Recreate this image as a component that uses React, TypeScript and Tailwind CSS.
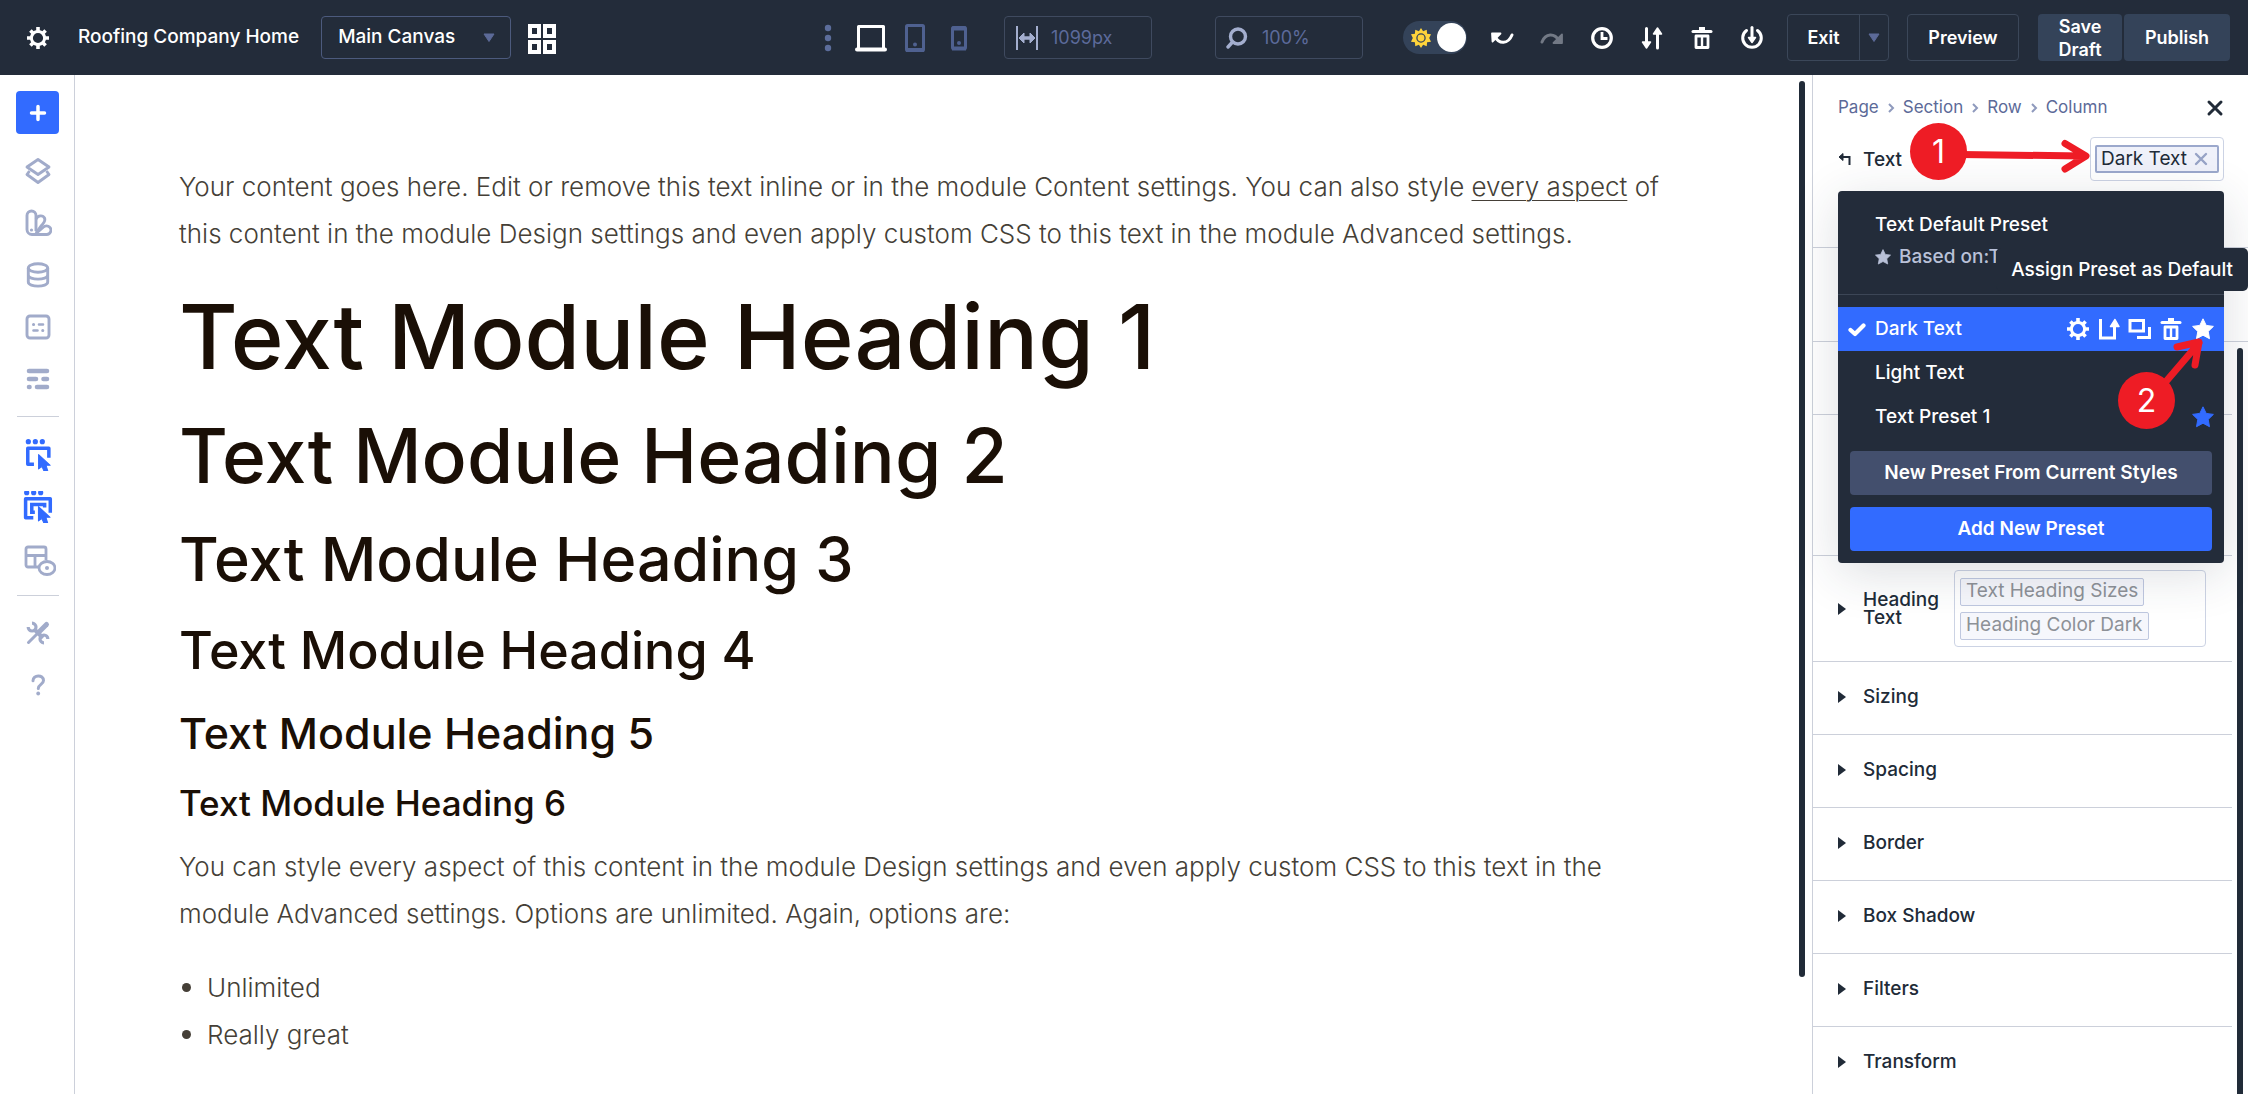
import React from 'react';

type IconProps = { size?: number; className?: string; children: React.ReactNode };

function Icon({ size = 28, className = '', children }: IconProps) {
  return (
    <svg
      width={size}
      height={size}
      viewBox="0 0 28 28"
      fill="none"
      stroke="currentColor"
      strokeWidth="3"
      aria-hidden="true"
      className={`shrink-0 ${className}`}
    >
      {children}
    </svg>
  );
}

const GearShape = () => (
  <>
    <circle cx="14" cy="14" r="6.6" />
    <path d="M14 3v4M14 21v4M3 14h4M21 14h4M6.4 6.400l2.500 2.500M19.100 19.100l2.500 2.500M6.400 21.600l2.500-2.500M19.100 8.900l2.500-2.500" strokeWidth="3.600" />
  </>
);

const TrashShape = () => (
  <>
    <path d="M5 7.500h18" strokeLinecap="round" />
    <path d="M11 5h6" strokeWidth="4" />
    <path d="M8 12v11.500h12V12z" strokeWidth="2.800" strokeLinejoin="round" />
    <path d="M14 12v11" strokeWidth="2.400" />
  </>
);

const Star = ({ className = '', size = 22 }: { className?: string; size?: number }) => (
  <svg width={size} height={size} viewBox="0 0 22 22" fill="currentColor" aria-hidden="true" className={`shrink-0 ${className}`}>
    <path d="M11 0.8l3.2 6.6 7.2 1-5.2 5 1.3 7.3L11 17.2l-6.5 3.5 1.3-7.3-5.2-5 7.2-1z" stroke="currentColor" strokeLinejoin="round" />
  </svg>
);

const Caret = ({ className = '' }: { className?: string }) => (
  <svg width="12" height="10" viewBox="0 0 12 10" fill="currentColor" aria-hidden="true" className={className}>
    <path d="M1 1h10L6 8.500z" stroke="currentColor" strokeLinejoin="round" />
  </svg>
);

function IconButton({ label, className = '', children }: { label: string; className?: string; children: React.ReactNode }) {
  return (
    <button type="button" aria-label={label} className={`flex shrink-0 items-center justify-center ${className}`}>
      {children}
    </button>
  );
}

function TopBar() {
  return (
    <header className="flex h-[75px] shrink-0 items-center bg-[#232c3a] pr-[18px] pl-[24px] text-[18px] font-medium text-white">
      <IconButton label="Builder settings">
        <Icon><GearShape /></Icon>
      </IconButton>
      <span className="ml-[26px] shrink-0 text-[19px] whitespace-nowrap">Roofing Company Home</span>
      <div className="relative ml-[22px] w-[190px] shrink-0 text-[19px]">
        <select aria-label="Canvas" className="h-[43px] w-full appearance-none rounded-[4px] border border-[#4c5a7d] bg-transparent pl-4 font-medium">
          <option>Main Canvas</option>
        </select>
        <Caret className="pointer-events-none absolute top-[17px] right-4 text-[#5c6a98]" />
      </div>
      <IconButton label="Canvas grid" className="ml-[16px]">
        <svg width="30" height="34" viewBox="0 0 30 34" fill="none" stroke="currentColor" strokeWidth="4" aria-hidden="true">
          <path d="M3 5h9v10H3zM18 5h9v10h-9zM3 21h9v10H3zM18 21h9v10h-9z" />
        </svg>
      </IconButton>

      <div className="ml-auto flex shrink-0 items-center">
        <IconButton label="More views" className="text-[#5c6d9b]">
          <svg width="8" height="28" viewBox="0 0 8 28" fill="currentColor" aria-hidden="true">
            <circle cx="4" cy="4" r="3.200" /><circle cx="4" cy="14" r="3.200" /><circle cx="4" cy="24" r="3.200" />
          </svg>
        </IconButton>
        <IconButton label="Desktop" className="ml-[23px]">
          <svg width="32" height="28" viewBox="0 0 32 28" fill="none" stroke="currentColor" strokeWidth="3" aria-hidden="true">
            <path d="M3.500 24V2.500h25V24" strokeLinejoin="round" /><path d="M2 25.500h28" strokeWidth="4" strokeLinecap="round" />
          </svg>
        </IconButton>
        <IconButton label="Tablet" className="ml-[18px] text-[#4f6190]">
          <svg width="20" height="30" viewBox="0 0 20 30" fill="none" stroke="currentColor" strokeWidth="3" aria-hidden="true">
            <rect x="1.500" y="2.500" width="17" height="25" rx="1" /><path d="M1 27h18" strokeWidth="4" /><circle cx="10" cy="21.500" r="2" fill="currentColor" stroke="none" />
          </svg>
        </IconButton>
        <IconButton label="Phone" className="ml-[25px] text-[#4f6190]">
          <svg width="18" height="28" viewBox="0 0 18 28" fill="none" stroke="currentColor" strokeWidth="3" aria-hidden="true">
            <rect x="2.500" y="3.500" width="13" height="21" rx="1" /><path d="M2 4.500h14M2 24.500h14" strokeWidth="4" /><circle cx="9" cy="19" r="2" fill="currentColor" stroke="none" />
          </svg>
        </IconButton>
        <label className="ml-[36px] flex h-[43px] w-[148px] items-center gap-[13px] rounded-[4px] border border-[#3f4a5f] pl-[11px]">
          <svg width="22" height="24" viewBox="0 0 22 24" fill="none" stroke="#a3aece" strokeWidth="2" aria-hidden="true" className="shrink-0">
            <path d="M1 0v24M21 0v24" strokeWidth="2" /><path d="M5 12h12" strokeWidth="3.500" /><path d="M8 7l-5 5 5 5zM14 7l5 5-5 5z" fill="#a3aece" strokeWidth="1" />
          </svg>
          <input aria-label="Canvas width" defaultValue="1099px" className="w-full min-w-0 bg-transparent font-normal text-[#5c6a9b] outline-none" />
        </label>
        <label className="ml-[63px] flex h-[43px] w-[148px] items-center gap-[14px] rounded-[4px] border border-[#3f4a5f] pl-[10px]">
          <svg width="22" height="24" viewBox="0 0 22 24" fill="none" stroke="#a3aece" strokeWidth="3.400" aria-hidden="true" className="shrink-0">
            <circle cx="12" cy="10.500" r="7.500" /><path d="M6.500 16L2 21" strokeLinecap="round" />
          </svg>
          <input aria-label="Zoom" defaultValue="100%" className="w-full min-w-0 bg-transparent font-normal text-[#5c6a9b] outline-none" />
        </label>
      </div>

      <div className="ml-[40px] flex shrink-0 items-center">
        <label className="relative flex h-[33px] w-[64px] items-center justify-between rounded-full bg-[#344359] pr-px pl-[8px]">
          <input type="checkbox" defaultChecked aria-label="Light mode" className="peer sr-only" />
          <svg width="20" height="22" viewBox="0 0 22 22" aria-hidden="true">
            <path d="M11 0l2.300 3.600 4-1.600.4 4.300 4.300.7L20 11l2 4-4.300.7-.4 4.300-4-1.600L11 22l-2.300-3.600-4 1.600-.4-4.300L0 15l2-4-2-4 4.300-.7.4-4.300 4 1.600z" fill="#ffd43b" />
            <circle cx="11" cy="11" r="4.500" fill="none" stroke="#344359" strokeWidth="1.400" />
          </svg>
          <span className="size-[29px] rounded-full bg-white" />
        </label>
        <IconButton label="Undo" className="ml-[21px]">
          <Icon>
            <path d="M7 12.500c4 8 13 8 17-1.500" strokeWidth="3" strokeLinecap="round" /><path d="M4 9.500h8.500L4.500 17.500z" fill="currentColor" strokeWidth="1.800" strokeLinejoin="round" />
          </Icon>
        </IconButton>
        <IconButton label="Redo" className="ml-[22px] text-[#727985]">
          <Icon>
            <path d="M4 18c3.500-9 12.500-9 17-1.500" strokeWidth="3" strokeLinecap="round" /><path d="M24 10.500v8.500h-8.500z" fill="currentColor" strokeWidth="1.800" strokeLinejoin="round" />
          </Icon>
        </IconButton>
        <IconButton label="History" className="ml-[22px]">
          <Icon><circle cx="14" cy="14" r="9.300" strokeWidth="3.200" /><path d="M14 8v6.500h5.500" strokeWidth="2.800" /></Icon>
        </IconButton>
        <IconButton label="Portability" className="ml-[22px]">
          <Icon>
            <path d="M8.500 4.500V20M19.500 24V9" strokeLinecap="round" /><path d="M4.500 18h8L8.500 24zM15.500 10h8L19.500 4z" fill="currentColor" strokeWidth="1.500" strokeLinejoin="round" />
          </Icon>
        </IconButton>
        <IconButton label="Clear layout" className="ml-[22px]">
          <Icon><TrashShape /></Icon>
        </IconButton>
        <IconButton label="Save to library" className="ml-[22px]">
          <Icon>
            <path d="M8.500 6.500a9.300 9.300 0 1 0 11 0" strokeLinecap="round" /><path d="M14 3.500V15" strokeLinecap="round" /><path d="M10.500 13.500h7L14 18.500z" fill="currentColor" strokeWidth="1.500" strokeLinejoin="round" />
          </Icon>
        </IconButton>
        <div className="ml-[21px] flex h-[47px] w-[102px] items-stretch rounded-[4px] border border-[#3b4759] font-semibold">
          <button type="button" className="flex-1 border-r border-[#3b4759]">Exit</button>
          <button type="button" aria-label="Exit options" className="flex w-[28px] items-center justify-center text-[#5c6a98]"><Caret /></button>
        </div>
        <button type="button" className="ml-[18px] h-[47px] w-[112px] rounded-[4px] border border-[#3b4759] font-semibold">Preview</button>
        <button type="button" className="ml-[19px] h-[47px] w-[84px] rounded-[4px] bg-[#344359] px-4 leading-[23px] font-semibold">Save Draft</button>
        <button type="button" className="ml-[2px] h-[47px] w-[106px] rounded-[4px] bg-[#344359] font-semibold">Publish</button>
      </div>
    </header>
  );
}

function SideBar() {
  return (
    <nav aria-label="Builder tools" className="flex w-[75px] shrink-0 flex-col items-center border-r border-[#ccd0da] pt-[16px] pl-px text-[#a1abca]">
      <button type="button" aria-label="Add" className="flex size-[43px] items-center justify-center rounded-[4px] bg-[#326bff] text-white">
        <Icon><path d="M14 7.500v13M7.500 14h13" strokeWidth="3.500" strokeLinecap="round" /></Icon>
      </button>
      <div className="mt-[23px] flex flex-col gap-[24px]">
        <IconButton label="Layers">
          <Icon>
            <path d="M14 2.500l11 7.500-11 7.500L3 10z" strokeWidth="2.900" strokeLinejoin="round" /><path d="M5.500 14L3 17.500l11 8 11-8-2.500-3.500" strokeWidth="2.900" strokeLinejoin="round" />
          </Icon>
        </IconButton>
        <IconButton label="Variables">
          <Icon>
            <path d="M12 22V6.500a4.500 4.500 0 0 0-9 0v14a5 5 0 0 0 5 5h14.500a4.300 4.300 0 0 0 3-7.500c-1.500-1.500-4.500-1.500-6 0L12 24.500" strokeWidth="2.900" /><path d="M12 10c2-4 7-4 8.500-1 1.500 3-1 5-3 7.500L12 24" strokeWidth="2.900" /><circle cx="7.500" cy="21" r="1.600" fill="currentColor" stroke="none" />
          </Icon>
        </IconButton>
        <IconButton label="Dynamic content">
          <Icon>
            <ellipse cx="14" cy="7" rx="9.700" ry="4.200" strokeWidth="2.900" /><path d="M4.300 7v14c0 5.500 19.400 5.500 19.400 0V7M4.300 14c0 5.500 19.400 5.500 19.400 0" strokeWidth="2.900" />
          </Icon>
        </IconButton>
        <IconButton label="Custom code">
          <Icon>
            <rect x="3" y="3" width="22" height="22" rx="3" strokeWidth="2.900" /><path d="M15 11.500h4M9.500 17.500h4" strokeWidth="2.600" strokeLinecap="round" /><path d="M9.500 11.500h.1M18.700 17.500h.1" strokeWidth="3" strokeLinecap="round" />
          </Icon>
        </IconButton>
        <IconButton label="Wireframe">
          <Icon>
            <path d="M5 6h18M5 14h7M19.500 14h3.500M5 22h.5M13 22h10" strokeWidth="4.600" strokeLinecap="round" />
          </Icon>
        </IconButton>
      </div>
      <hr className="mt-[23px] w-[42px] border-[#ccd0da]" />
      <div className="mt-[22px] flex flex-col gap-[20px] text-[#326bff]">
        <IconButton label="Click mode">
          <Icon size={32}>
            <g transform="translate(1 1) scale(0.9)">
              <path d="M5 1.500h.1M11.800 1.500h.1M18.600 1.500h.1" strokeWidth="5" strokeLinecap="round" />
              <path d="M10.500 23.500H4.500V8h20.500v9" strokeWidth="3.400" strokeLinejoin="round" />
              <path d="M15 14v14l3.300-2.300 2.200 4.800h3.600l-1.800-6h4z" fill="currentColor" strokeWidth="1" strokeLinejoin="round" />
            </g>
          </Icon>
        </IconButton>
        <IconButton label="Multi-select mode">
          <Icon size={32}>
            <g transform="translate(0 1) scale(0.9)">
              <path d="M4.500 0.500h.1M11.300 0.500h.1M18.100 0.500h.1" strokeWidth="5" strokeLinecap="round" />
              <path d="M11 25H3.500V6.500h24V20" strokeWidth="3.400" strokeLinejoin="round" />
              <path d="M12.500 19.500H9.500V12h12.500v3" strokeWidth="3.400" />
              <path d="M16 14v14l3.300-2.300 2.200 4.800h3.600l-1.800-6h4z" fill="currentColor" strokeWidth="1" strokeLinejoin="round" />
            </g>
          </Icon>
        </IconButton>
        <button type="button" aria-label="Layout preview" className="-mr-[6px] text-[#a1abca]">
          <svg width="34" height="34" viewBox="0 0 34 34" fill="none" stroke="currentColor" strokeWidth="2.800" aria-hidden="true">
            <path d="M16 24H6a2 2 0 0 1-2-2V6a2 2 0 0 1 2-2h16a2 2 0 0 1 2 2v11M4 12.500h20M13 12.500V24" /><ellipse cx="25" cy="25" rx="8" ry="6.500" fill="white" /><circle cx="25" cy="25" r="2" fill="currentColor" stroke="none" />
          </svg>
        </button>
      </div>
      <hr className="mt-[18px] w-[42px] border-[#ccd0da]" />
      <div className="mt-[23px] flex flex-col gap-[24px]">
        <IconButton label="Tools">
          <Icon>
            <path d="M10 10l9 9" strokeWidth="4" /><path d="M8 4.200a3.900 3.900 0 1 1-3.800 3.800M20 23.800a3.900 3.900 0 1 1 3.800-3.800" strokeWidth="3.200" /><path d="M4.500 23.500L14 14" strokeWidth="3" strokeLinecap="round" /><path d="M15.500 12.500L22.500 5.500" strokeWidth="5" strokeLinecap="round" />
          </Icon>
        </IconButton>
        <IconButton label="Help">
          <Icon>
            <path d="M9 9.800c0-6.500 10.500-6.500 10.500-.3 0 4-5.200 3.800-5.200 8" strokeWidth="3" strokeLinecap="round" /><circle cx="14.200" cy="22.500" r="1.900" fill="currentColor" stroke="none" />
          </Icon>
        </IconButton>
      </div>
    </nav>
  );
}

function Canvas() {
  return (
    <main className="flex min-w-0 flex-1 items-start pr-[7px]">
      <article className="min-w-0 flex-1 pt-[88px] pr-[134px] pl-[104px] text-[26px] leading-[47px] font-light text-[#453f37]">
        <p>
          Your content goes here. Edit or remove this text inline or in the module Content settings. You can also style{' '}
          <a href="#aspect" className="underline decoration-1 underline-offset-4">every aspect</a> of this content in the module Design settings and even apply custom
          CSS to this text in the module Advanced settings.
        </p>
        <div className="mt-[24px] font-medium text-[#1a0f06]">
          <h1 className="mb-[16px] text-[90px] leading-[112px]">Text Module Heading 1</h1>
          <h2 className="mb-[16px] text-[75px] leading-[94px]">Text Module Heading 2</h2>
          <h3 className="mb-[14px] text-[61px] leading-[80px]">Text Module Heading 3</h3>
          <h4 className="mb-[14px] text-[52px] leading-[76px]">Text Module Heading 4</h4>
          <h5 className="mb-[14px] text-[43px] leading-[60px]">Text Module Heading 5</h5>
          <h6 className="mb-[14px] text-[35px] leading-[52px]">Text Module Heading 6</h6>
        </div>
        <p>
          You can style every aspect of this content in the module Design settings and even apply custom CSS to this text in the module Advanced settings. Options are
          unlimited. Again, options are:
        </p>
        <ul className="mt-[27px]">
          {['Unlimited', 'Really great'].map((item) => (
            <li key={item} className="flex items-center gap-[16px] pl-[3px]">
              <span className="size-[9px] rounded-full bg-[#453f37]" />
              {item}
            </li>
          ))}
        </ul>
      </article>
      <div className="mt-[6px] h-[896px] w-[6px] shrink-0 rounded-full bg-[#212b38]" />
    </main>
  );
}

const sections = ['Sizing', 'Spacing', 'Border', 'Box Shadow', 'Filters', 'Transform'];

const Disclosure = () => (
  <svg width="8" height="12" viewBox="0 0 8 12" fill="currentColor" aria-hidden="true" className="shrink-0">
    <path d="M0 0l8 6-8 6z" />
  </svg>
);

function PresetMenu() {
  return (
    <div className="absolute top-[116px] right-[24px] left-[25px] rounded-[4px] bg-[#232c3a] pb-[12px] text-[19px] leading-[24px] font-medium text-white shadow-[0_10px_50px_rgba(40,50,70,0.16)]">
      <div className="border-b border-[#3c4656] pt-[22px] pb-[25px] pl-[37px]">
        <div>Text Default Preset</div>
        <div className="mt-[8px] flex items-center gap-[8px] text-[#b9c1d8]">
          <Star size={16} />
          <span className="whitespace-nowrap">Based on:Text Default Preset</span>
        </div>
      </div>
      <div className="mt-[12px] flex h-[44px] items-center bg-[#326bff] pr-[10px] pl-[10px]">
        <svg width="18" height="16" viewBox="0 0 18 16" fill="none" stroke="currentColor" strokeWidth="4.200" aria-hidden="true">
          <path d="M2.500 9l4.500 4L15.500 4.500" strokeLinecap="round" strokeLinejoin="round" />
        </svg>
        <button type="button" className="ml-[9px] flex-1 text-left">Dark Text</button>
        <div className="flex items-center gap-[3px]">
          <IconButton label="Preset settings"><Icon><GearShape /></Icon></IconButton>
          <IconButton label="Export preset">
            <Icon><path d="M5.500 4v19h14V11" strokeWidth="3" /><path d="M15.500 11.500h8.500l-4-7z" fill="currentColor" strokeWidth="1.500" strokeLinejoin="round" /></Icon>
          </IconButton>
          <IconButton label="Duplicate preset">
            <Icon><path d="M4 5.500h13.500V16H4zM23.500 12v10.500H11" strokeWidth="3" /></Icon>
          </IconButton>
          <IconButton label="Delete preset"><Icon><TrashShape /></Icon></IconButton>
          <IconButton label="Assign preset as default" className="ml-[4px]"><Star /></IconButton>
        </div>
      </div>
      <button type="button" className="block h-[44px] w-full pl-[37px] text-left">Light Text</button>
      <button type="button" className="flex h-[44px] w-full items-center justify-between pr-[10px] pl-[37px] text-left">
        Text Preset 1
        <Star className="text-[#326bff]" />
      </button>
      <div className="mt-[12px] flex flex-col gap-[12px] px-[12px] font-semibold">
        <button type="button" className="h-[44px] rounded-[4px] bg-[#434f6d]">New Preset From Current Styles</button>
        <button type="button" className="h-[44px] rounded-[4px] bg-[#326bff]">Add New Preset</button>
      </div>
      <div role="tooltip" className="absolute top-[57px] -right-[24px] flex h-[43px] items-center rounded-[5px] bg-[#232c3a] px-[15px] pt-px whitespace-nowrap">
        Assign Preset as Default
      </div>
    </div>
  );
}

function Annotations() {
  return (
    <>
      <svg width="156" height="58" viewBox="0 0 156 58" fill="none" stroke="#ee1c25" strokeWidth="7" strokeLinecap="round" strokeLinejoin="round" aria-hidden="true" className="absolute top-[47px] left-[122px]">
        <path d="M26 32.500L148 34M130 21.500l21 12.500-21 13" />
      </svg>
      <div className="absolute top-[48px] left-[97px] flex size-[57px] items-center justify-center rounded-full bg-[#ee1c25] text-[32px] text-white">1</div>
      <svg width="70" height="70" viewBox="0 0 70 70" fill="none" stroke="#ee1c25" strokeWidth="7" strokeLinecap="round" strokeLinejoin="round" aria-hidden="true" className="absolute top-[257px] left-[332px]">
        <path d="M12 60L54 11M32 15l22-5-4 23" />
      </svg>
      <div className="absolute top-[297px] left-[305px] flex size-[57px] items-center justify-center rounded-full bg-[#ee1c25] text-[32px] text-white">2</div>
    </>
  );
}

function SettingsPanel() {
  return (
    <aside className="relative w-[436px] shrink-0 border-l border-[#ccd0da] text-[19px] text-[#212b38]">
      <div className="h-[172px] pr-[24px] pl-[25px]">
        <div className="flex h-[62px] items-center justify-between pt-[4px]">
          <nav aria-label="Breadcrumb" className="flex items-center gap-[8px] text-[17px] text-[#5c6a98]">
            {['Page', 'Section', 'Row', 'Column'].map((crumb, i) => (
              <React.Fragment key={crumb}>
                {i > 0 && (
                  <svg width="8" height="10" viewBox="0 0 8 10" fill="none" stroke="#8f9abd" strokeWidth="2" aria-hidden="true">
                    <path d="M2 1l4 4-4 4" />
                  </svg>
                )}
                <a href={`#${crumb}`}>{crumb}</a>
              </React.Fragment>
            ))}
          </nav>
          <IconButton label="Close">
            <svg width="18" height="18" viewBox="0 0 18 18" stroke="currentColor" strokeWidth="3" strokeLinecap="round" aria-hidden="true">
              <path d="M3 3l12 12M15 3L3 15" />
            </svg>
          </IconButton>
        </div>
        <div className="flex h-[44px] items-center">
          <IconButton label="Back">
            <svg width="13" height="14" viewBox="0 0 13 14" fill="none" stroke="currentColor" strokeWidth="2" aria-hidden="true">
              <path d="M3 5h8.500v8" /><path d="M5 1.500v7L1 5z" fill="currentColor" strokeWidth="1" />
            </svg>
          </IconButton>
          <h2 className="ml-[12px] pt-[2px] font-medium">Text</h2>
          <div className="ml-auto flex h-[44px] items-center rounded-[4px] border border-[#ccd3e4] px-[4px]">
            <span className="flex h-[28px] items-center gap-[7px] rounded-[2px] border-2 border-[#9ba8cc] bg-[#eff1fa] pr-[9px] pl-[4px]">
              Dark Text
              <IconButton label="Remove preset">
                <svg width="14" height="14" viewBox="0 0 14 14" stroke="#97a3c6" strokeWidth="2.400" strokeLinecap="round" aria-hidden="true">
                  <path d="M2 2l10 10M12 2L2 12" />
                </svg>
              </IconButton>
            </span>
          </div>
        </div>
      </div>
      <div className="h-[95px] border-y border-[#ccd0da]" />
      <div className="mr-[16px] h-[73px] border-b border-[#ccd0da]" />
      <div className="mr-[16px] h-[141px] border-b border-[#ccd0da]" />
      <div className="pr-[16px]">
        <div className="flex h-[106px] items-center border-b border-[#ccd0da] pr-[26px] pl-[25px]">
          <button type="button" className="flex w-[116px] items-center gap-[17px] text-left leading-[18px] font-medium">
            <Disclosure />
            <span>Heading Text</span>
          </button>
          <div className="flex h-[77px] flex-1 flex-col items-start justify-center gap-[6px] rounded-[4px] border border-[#ccd3e4] px-[5px] text-[#8d9197]">
            {['Text Heading Sizes', 'Heading Color Dark'].map((preset) => (
              <span key={preset} className="flex h-[28px] items-center rounded-[2px] border border-[#bfc8e0] bg-[#f6f7fc] px-[5px]">{preset}</span>
            ))}
          </div>
        </div>
        {sections.map((name) => (
          <button key={name} type="button" className="flex h-[73px] w-full items-center gap-[17px] border-b border-[#ccd0da] pb-[2px] pl-[25px] font-medium">
            <Disclosure />
            {name}
          </button>
        ))}
      </div>
      <div className="absolute top-[273px] right-[5px] bottom-0 w-[6px] rounded-t-full bg-[#212b38]" />
      <PresetMenu />
      <Annotations />
    </aside>
  );
}

export default function App() {
  return (
    <div className="flex h-screen flex-col overflow-hidden bg-white font-['Inter',sans-serif]">
      <TopBar />
      <div className="flex min-h-0 flex-1">
        <SideBar />
        <Canvas />
        <SettingsPanel />
      </div>
    </div>
  );
}
